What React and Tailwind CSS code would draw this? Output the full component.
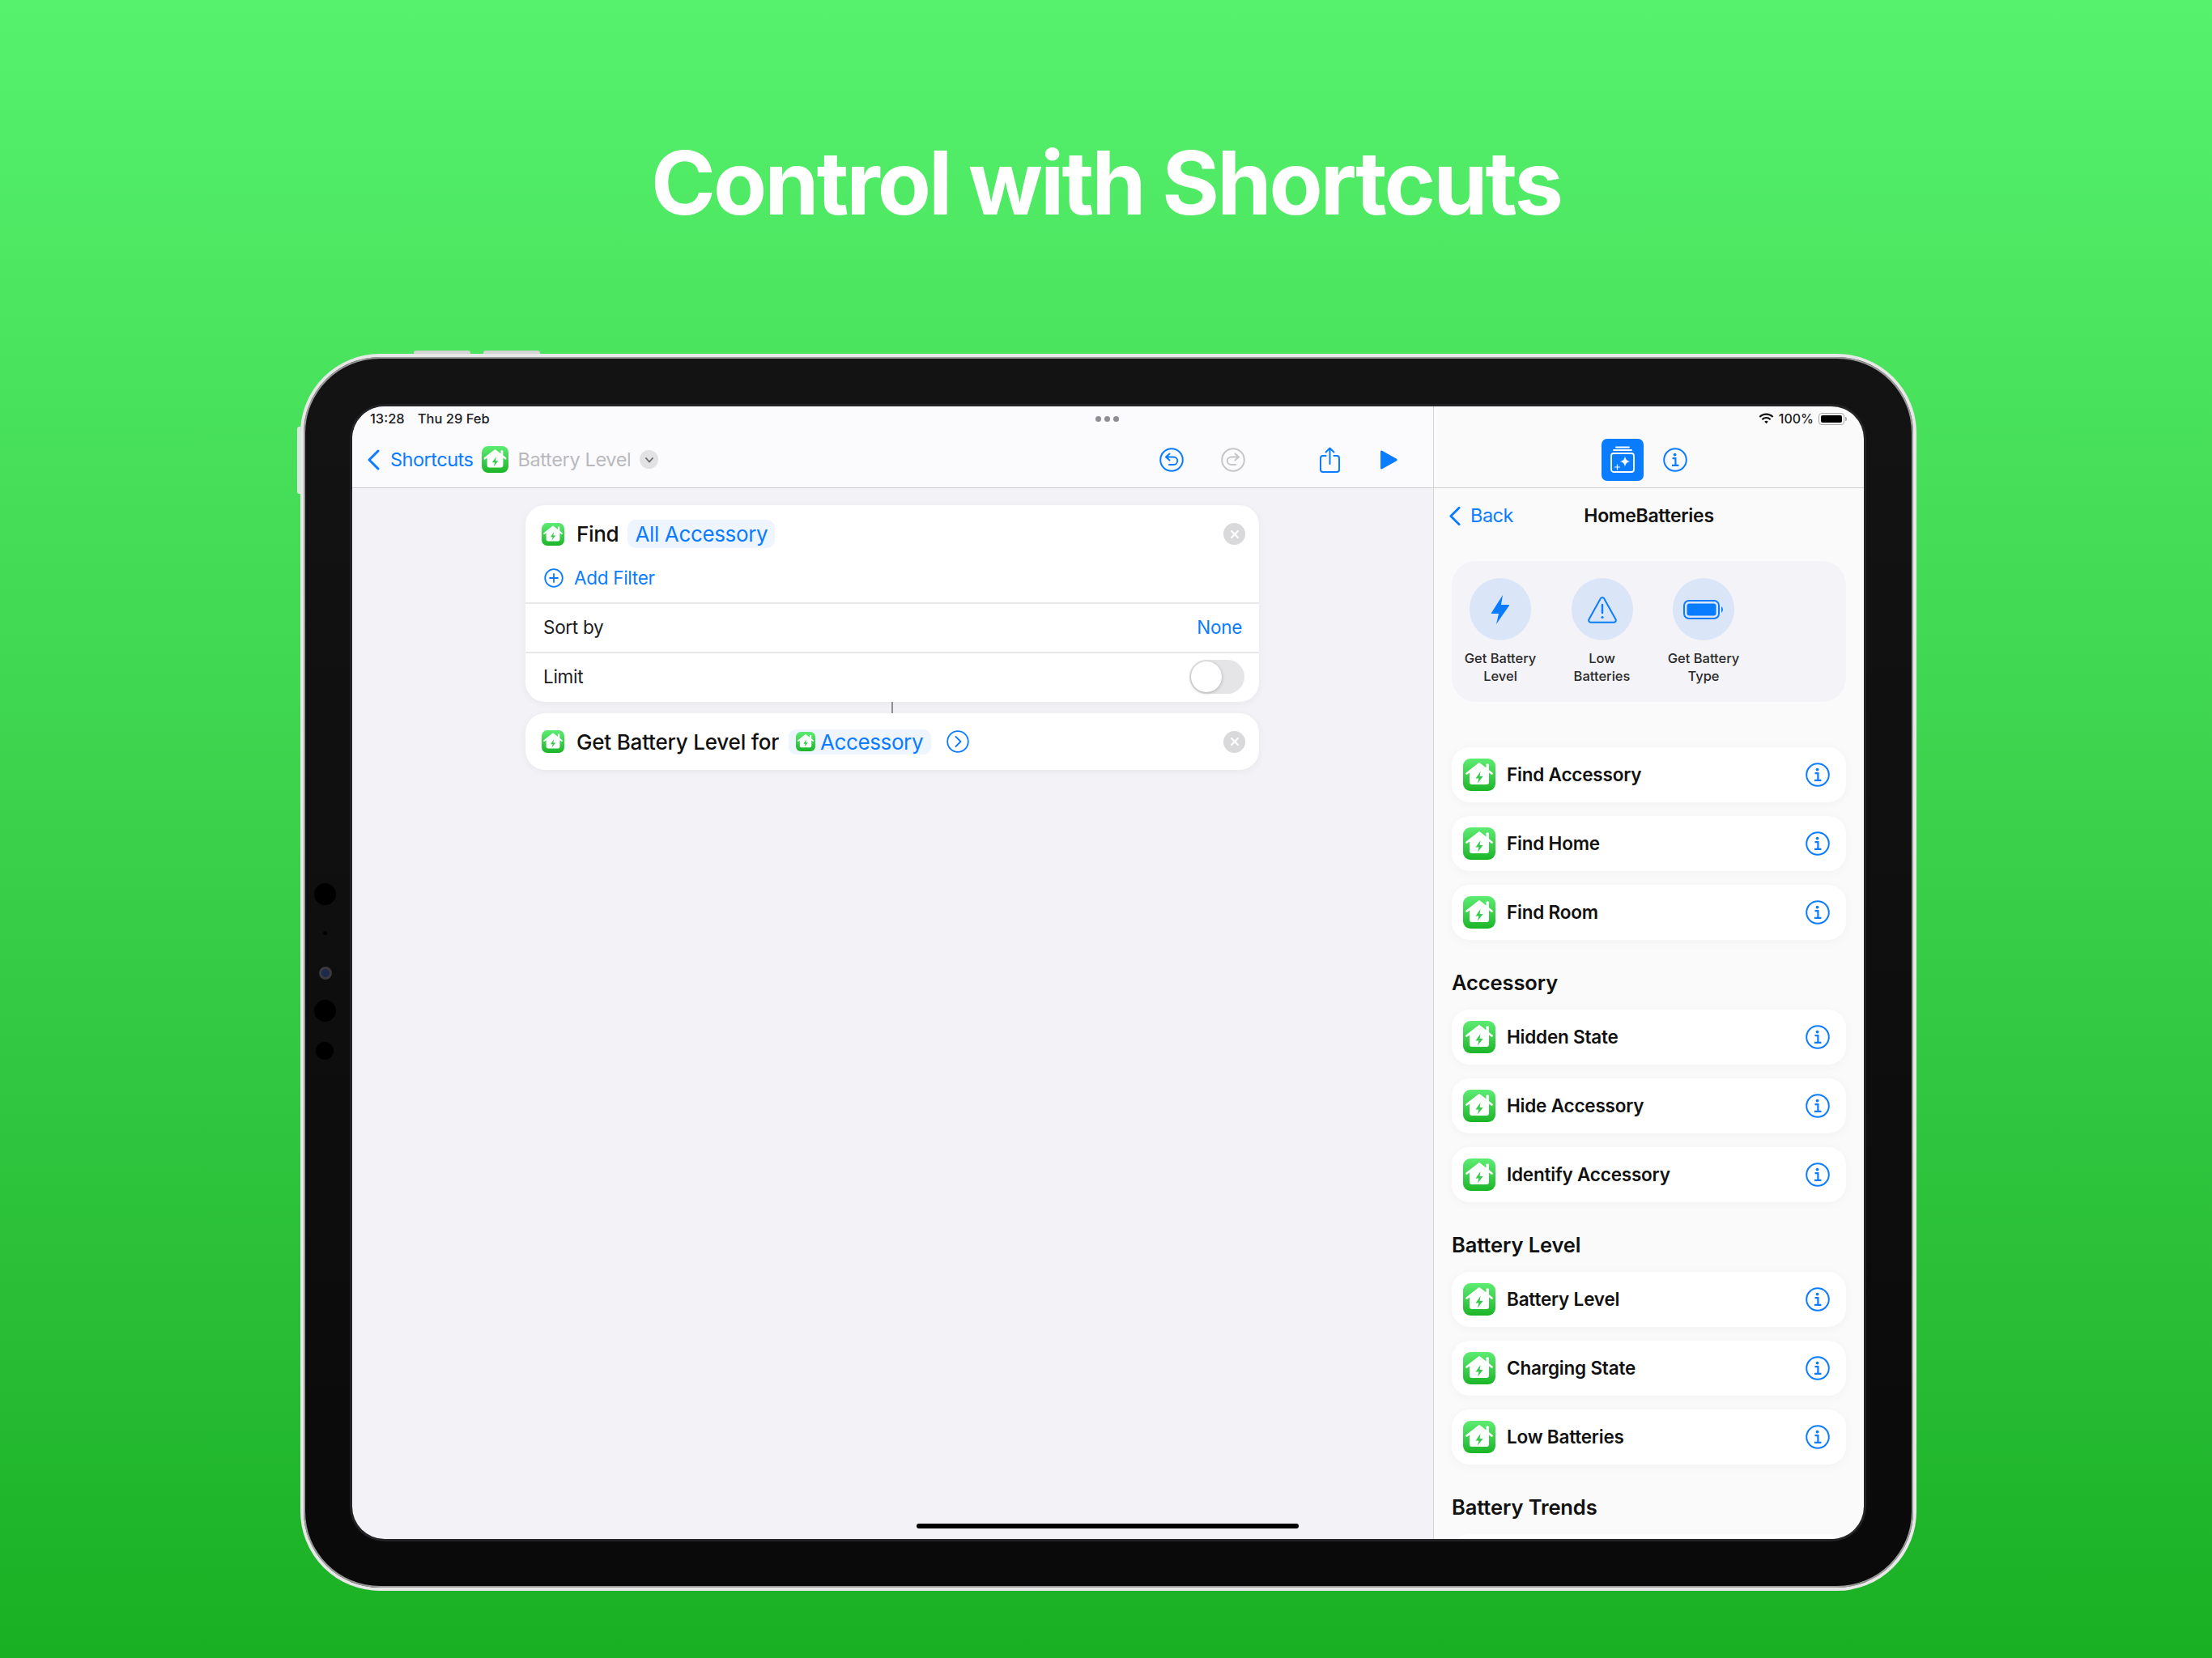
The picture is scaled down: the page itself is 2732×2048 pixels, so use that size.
import React from 'react';

const BLUE = '#0a7cff';

// Green app tile with the house and bolt
const AppIcon = ({ className }) => (
  <div className={`shrink-0 bg-linear-to-b from-[#5cec72] to-[#19b526] ${className}`}>
    <svg viewBox="0 0 40 40" className="w-full h-full">
      <path d="M8 17 L20 8 L32 17 V29 a3 3 0 0 1 -3 3 H11 a3 3 0 0 1 -3 -3 Z" fill="#fff" />
      <path d="M4.5 18.5 L20 6.5 L35.5 18.5" fill="none" stroke="#fff" strokeWidth="2.8" strokeLinecap="round" strokeLinejoin="round" />
      <rect x="28.5" y="6.5" width="3.4" height="8" rx="0.8" fill="#fff" />
      <path d="M21.5 16 L15.5 24.5 H19.4 L18 30.5 L24.6 22 H20.6 Z" fill="#35cc4c" />
    </svg>
  </div>
);

const InfoIcon = ({ className }) => (
  <svg viewBox="0 0 30 30" className={className} fill="none" stroke={BLUE}>
    <circle cx="15" cy="15" r="13.8" strokeWidth="2" />
    <circle cx="14.6" cy="8.6" r="1.9" fill={BLUE} stroke="none" />
    <path d="M11.5 13.2 H15.4 V21.6 M11 21.8 H19.4" strokeWidth="2.2" />
  </svg>
);

const CloseButton = () => (
  <div className="w-[27px] h-[27px] rounded-full bg-[#d9d9db] flex items-center justify-center">
    <svg viewBox="0 0 12 12" className="w-[12px] h-[12px]" stroke="#fff" strokeWidth="2" strokeLinecap="round">
      <path d="M2 2 L10 10 M10 2 L2 10" />
    </svg>
  </div>
);

const BackChevron = ({ className }) => (
  <svg viewBox="0 0 16 26" className={className} fill="none" stroke={BLUE} strokeWidth="3" strokeLinecap="round" strokeLinejoin="round">
    <path d="M14 2 L3 13 L14 24" />
  </svg>
);

const ActionRow = ({ label }) => (
  <div className="h-[68px] bg-white rounded-[22px] shadow-[0_2px_14px_rgba(0,0,0,0.035)] flex items-center pl-[14px] pr-[20px]">
    <AppIcon className="w-[40px] h-[40px] rounded-[9px]" />
    <span className="ml-[14px] text-[22.5px] font-semibold text-[#111] tracking-[-0.2px]">{label}</span>
    <InfoIcon className="ml-auto w-[30px] h-[30px]" />
  </div>
);

const SectionTitle = ({ children }) => (
  <h2 className="mt-[37px] h-[32px] leading-[32px] mb-[17px] text-[25.5px] font-semibold text-[#111] tracking-[-0.1px]">{children}</h2>
);

const Section = ({ title, items }) => (
  <div>
    <SectionTitle>{title}</SectionTitle>
    <div className="flex flex-col gap-[17px]">
      {items.map((label) => (
        <ActionRow key={label} label={label} />
      ))}
    </div>
  </div>
);

const Suggestion = ({ label, children }) => (
  <div className="w-[110px] flex flex-col items-center">
    <div className="w-[76px] h-[77px] rounded-full bg-[#dae6f8] flex items-center justify-center">{children}</div>
    <p className="mt-[11px] text-[16.5px] leading-[22px] text-center text-[#2a2a2a] font-medium">{label}</p>
  </div>
);

const App = () => {
  return (
    <div className="w-[2732px] h-[2048px] overflow-hidden flex flex-col items-center bg-linear-to-b from-[#56f26d] to-[#19b023] font-['Inter',sans-serif]">
      <h1 className="pt-[160px] h-[292px] leading-[132px] text-[108px] font-bold text-white tracking-[-2.9px]">
        Control with Shortcuts
      </h1>

      {/* Device */}
      <div className="relative mt-[145px] ml-[6px] w-[1996px] h-[1528px] rounded-[98px] bg-linear-to-b from-[#131313] to-[#0a0a0a] border-[4px] border-[#e8e8e8] shadow-[inset_0_0_0_2px_#9a9a9a] pt-[61px] pl-[60px]">
        {/* Hardware buttons */}
        <div className="absolute top-[-8px] left-[136px] w-[70px] h-[4px] rounded-t-[3px] bg-[#d4d4d4]" />
        <div className="absolute top-[-8px] left-[222px] w-[70px] h-[4px] rounded-t-[3px] bg-[#d4d4d4]" />
        <div className="absolute top-[86px] left-[-8px] w-[4px] h-[83px] rounded-l-[3px] bg-[#d8e8dc]" />

        {/* Cameras and sensors */}
        <div className="absolute left-[13px] top-[650px] w-[27px] h-[27px] rounded-full bg-black" />
        <div className="absolute left-[24px] top-[709px] w-[5px] h-[5px] rounded-full bg-black" />
        <div className="absolute left-[19px] top-[753px] w-[16px] h-[16px] rounded-full bg-[#1e2a4c] border-[3px] border-[#3a3a3e]" />
        <div className="absolute left-[13px] top-[794px] w-[27px] h-[27px] rounded-full bg-black" />
        <div className="absolute left-[15px] top-[846px] w-[22px] h-[22px] rounded-full bg-black" />

        {/* Screen */}
        <div className="relative w-[1867px] h-[1399px] rounded-[40px] overflow-hidden flex shadow-[0_0_0_3px_#232326]">
          {/* Editor */}
          <div className="w-[1336px] flex flex-col bg-[#f2f2f7] border-r border-[#d4d4d8]">
            <header className="h-[101px] shrink-0 flex flex-col bg-[#fbfbfd] border-b border-[#cfcfd3]">
              <div className="h-[30px] flex items-center pl-[22px] pr-[388px] text-[16.5px] font-medium text-[#1c1c1e]">
                <span>13:28</span>
                <span className="ml-[16px]">Thu 29 Feb</span>
                <div className="ml-auto flex gap-[4px]">
                  <div className="w-[7px] h-[7px] rounded-full bg-[#8e8e93]" />
                  <div className="w-[7px] h-[7px] rounded-full bg-[#8e8e93]" />
                  <div className="w-[7px] h-[7px] rounded-full bg-[#8e8e93]" />
                </div>
              </div>
              <div className="flex-1 flex items-center pl-[18px] pr-[44px] pt-[1px]">
                <BackChevron className="w-[16px] h-[26px]" />
                <span className="ml-[13px] text-[23.5px] text-[#0a7cff] tracking-[-0.5px]">Shortcuts</span>
                <AppIcon className="ml-[11px] w-[33px] h-[33px] rounded-[8px]" />
                <span className="ml-[11px] text-[23.5px] text-[#b9b9bd] tracking-[-0.35px]">Battery Level</span>
                <div className="ml-[11px] w-[23px] h-[23px] rounded-full bg-[#e2e2e5] flex items-center justify-center">
                  <svg viewBox="0 0 12 12" className="w-[12px] h-[12px]" fill="none" stroke="#666" strokeWidth="1.8" strokeLinecap="round" strokeLinejoin="round">
                    <path d="M2 4 L6 8.5 L10 4" />
                  </svg>
                </div>

                <svg viewBox="0 0 30 30" className="ml-auto w-[30px] h-[30px]" fill="none" stroke={BLUE} strokeWidth="2" strokeLinecap="round" strokeLinejoin="round">
                  <circle cx="15" cy="15" r="13.8" />
                  <path d="M12.5 7.5 L8 11.5 L12.5 15.5 M8.5 11.5 H17.5 a4.5 4.5 0 0 1 0 9.5 H12" />
                </svg>
                <svg viewBox="0 0 30 30" className="ml-[46px] w-[30px] h-[30px]" fill="none" stroke="#c6c6c8" strokeWidth="2" strokeLinecap="round" strokeLinejoin="round">
                  <circle cx="15" cy="15" r="13.8" />
                  <path d="M17.5 7.5 L22 11.5 L17.5 15.5 M21.5 11.5 H12.5 a4.5 4.5 0 0 0 0 9.5 H18" />
                </svg>
                <svg viewBox="0 0 25 32" className="ml-[92px] w-[25px] h-[32px]" fill="none" stroke={BLUE} strokeWidth="2" strokeLinecap="round" strokeLinejoin="round">
                  <path d="M7.5 11 H4 a3 3 0 0 0 -3 3 V28 a3 3 0 0 0 3 3 H21 a3 3 0 0 0 3 -3 V14 a3 3 0 0 0 -3 -3 H17.5" />
                  <path d="M12.5 21 V2 M7.5 6.5 L12.5 1.5 L17.5 6.5" />
                </svg>
                <svg viewBox="0 0 22 24" className="ml-[49px] w-[22px] h-[24px]">
                  <path d="M1 2 a1.4 1.4 0 0 1 2.1 -1.2 L21 10.8 a1.4 1.4 0 0 1 0 2.4 L3.1 23.2 A1.4 1.4 0 0 1 1 22 Z" fill={BLUE} />
                </svg>
              </div>
            </header>

            <main className="flex-1 pt-[21px] pl-[214px]">
              <div className="w-[906px] bg-white rounded-[24px] shadow-[0_2px_10px_rgba(0,0,0,0.05)]">
                <div className="h-[120px] pt-[18px] pl-[20px] pr-[17px]">
                  <div className="flex items-center h-[35px]">
                    <AppIcon className="w-[28px] h-[28px] rounded-[7px]" />
                    <span className="ml-[15px] text-[26px] font-medium text-[#111] tracking-[-0.3px]">Find</span>
                    <div className="ml-[11px] h-[35px] px-[9px] rounded-[10px] bg-[#eef5fe] flex items-center text-[26px] font-normal text-[#0a7cff] tracking-[-0.35px]">
                      All Accessory
                    </div>
                    <div className="ml-auto"><CloseButton /></div>
                  </div>
                  <div className="flex items-center mt-[20px] pl-[3px]">
                    <svg viewBox="0 0 24 24" className="w-[24px] h-[24px]" fill="none" stroke={BLUE} strokeWidth="1.8" strokeLinecap="round">
                      <circle cx="12" cy="12" r="10.8" />
                      <path d="M12 7 V17 M7 12 H17" />
                    </svg>
                    <span className="ml-[13px] text-[22.5px] text-[#0a7cff] tracking-[-0.3px]">Add Filter</span>
                  </div>
                </div>
                <div className="h-[61px] pb-[2px] border-t-2 border-[#e8e8ea] flex items-center justify-between pl-[22px] pr-[21px] text-[22.5px] tracking-[-0.3px]">
                  <span className="text-[#1c1c1e]">Sort by</span>
                  <span className="text-[#0a7cff]">None</span>
                </div>
                <div className="h-[62px] border-t-2 border-[#e8e8ea] flex items-center justify-between pl-[22px] pr-[18px] text-[22.5px] tracking-[-0.3px]">
                  <span className="pb-[2px] text-[#1c1c1e]">Limit</span>
                  <div className="w-[68px] h-[42px] mb-[2px] rounded-full bg-[#e5e5e7] p-[2px]">
                    <div className="w-[38px] h-[38px] rounded-full bg-white shadow-[0_1px_4px_rgba(0,0,0,0.25)]" />
                  </div>
                </div>
              </div>

              <div className="ml-[452px] w-[2px] h-[14px] bg-[#8e8e93]" />

              <div className="w-[906px] h-[70px] bg-white rounded-[24px] shadow-[0_2px_10px_rgba(0,0,0,0.05)] flex items-center pl-[20px] pr-[17px]">
                <AppIcon className="w-[28px] h-[28px] rounded-[7px]" />
                <span className="ml-[15px] text-[26px] font-medium text-[#111] tracking-[-0.2px]">Get Battery Level for</span>
                <div className="ml-[12px] h-[31px] pl-[9px] pr-[10px] rounded-[9px] bg-[#eef5fe] flex items-center">
                  <AppIcon className="w-[24px] h-[24px] rounded-[6px]" />
                  <span className="ml-[6px] text-[26px] text-[#0a7cff] tracking-[-0.4px]">Accessory</span>
                </div>
                <svg viewBox="0 0 28 28" className="ml-[19px] w-[28px] h-[28px]" fill="none" stroke={BLUE} strokeWidth="1.8" strokeLinecap="round" strokeLinejoin="round">
                  <circle cx="14" cy="14" r="12.8" />
                  <path d="M11.5 8 L17.5 14 L11.5 20" />
                </svg>
                <div className="ml-auto"><CloseButton /></div>
              </div>
            </main>
          </div>

          {/* Sidebar */}
          <aside className="flex-1 flex flex-col bg-[#fafafa] min-w-0">
            <header className="h-[101px] shrink-0 flex flex-col border-b border-[#cfcfd3]">
              <div className="h-[30px] flex items-center justify-end pr-[21px] text-[16px] font-medium text-[#1c1c1e]">
                <svg viewBox="0 0 20 14" className="w-[19px] h-[14px]" fill="none" stroke="#111" strokeWidth="2.2" strokeLinecap="butt">
                  <path d="M1.4 5 a12 12 0 0 1 17.2 0" />
                  <path d="M4.6 8.2 a7.6 7.6 0 0 1 10.8 0" />
                  <path d="M10 13.6 L7.6 11 a3.4 3.4 0 0 1 4.8 0 Z" fill="#111" stroke="none" />
                </svg>
                <span className="ml-[6px]">100%</span>
                <div className="ml-[6px] w-[32px] h-[15px] rounded-[4px] border border-[#a8a8a8] p-[2px]">
                  <div className="w-full h-full rounded-[2px] bg-black" />
                </div>
                <div className="ml-[1px] w-[2px] h-[5px] rounded-r-[2px] bg-[#a8a8a8]" />
              </div>
              <div className="flex-1 flex items-center pl-[207px] pt-[1px]">
                <div className="w-[52px] h-[52px] rounded-[7px] bg-[#0a7cff] flex items-center justify-center">
                  <svg viewBox="0 0 32 36" className="w-[32px] h-[36px]" fill="none" stroke="#fff" strokeWidth="1.8" strokeLinecap="round" strokeLinejoin="round">
                    <path d="M8 2.5 H24 M5 6 H27" />
                    <rect x="2" y="10" width="28" height="23" rx="3" />
                    <path d="M19 13.5 Q19.6 19 25 20 Q19.6 21 19 26.5 Q18.4 21 13 20 Q18.4 19 19 13.5 Z" fill="#fff" stroke="none" />
                    <path d="M9.5 24 V30 M6.5 27 H12.5" strokeWidth="1.2" />
                  </svg>
                </div>
                <InfoIcon className="ml-[24px] w-[30px] h-[30px]" />
              </div>
            </header>

            <div className="h-[68px] shrink-0 grid grid-cols-[1fr_auto_1fr] items-center pl-[18px]">
              <div className="flex items-center">
                <BackChevron className="w-[15px] h-[25px]" />
                <span className="ml-[12px] text-[23.5px] text-[#0a7cff] tracking-[-0.5px]">Back</span>
              </div>
              <span className="text-[23px] font-semibold text-[#111] tracking-[-0.3px] pr-[18px]">HomeBatteries</span>
            </div>

            <div className="mt-[22px] mx-[22px] flex flex-col">
              <div className="h-[174px] shrink-0 rounded-[30px] bg-[#f3f3f8] pt-[21px] pl-[5px] flex gap-[15.5px]">
                <Suggestion label={<>Get Battery<br />Level</>}>
                  <svg viewBox="0 0 24 38" className="w-[24px] h-[38px]">
                    <path d="M15 1 L1 23 a0.6 0.6 0 0 0 .5 1 H10 L7 37 L23 14 a0.6 0.6 0 0 0 -.5 -1 H13 Z" fill={BLUE} />
                  </svg>
                </Suggestion>
                <Suggestion label={<>Low<br />Batteries</>}>
                  <svg viewBox="0 0 36 34" className="w-[36px] h-[34px]" fill="none" stroke={BLUE} strokeWidth="2" strokeLinecap="round" strokeLinejoin="round">
                    <path d="M16 3 a2.4 2.4 0 0 1 4 0 L34.5 29 a2.6 2.6 0 0 1 -2 3.8 H3.5 a2.6 2.6 0 0 1 -2 -3.8 Z" />
                    <path d="M18 11 V21" strokeWidth="2.4" />
                    <circle cx="18" cy="26.5" r="1.6" fill={BLUE} stroke="none" />
                  </svg>
                </Suggestion>
                <Suggestion label={<>Get Battery<br />Type</>}>
                  <svg viewBox="0 0 50 24" className="w-[50px] h-[24px]" fill="none">
                    <rect x="1" y="1" width="43" height="22" rx="6" stroke={BLUE} strokeWidth="2" />
                    <rect x="4.5" y="4.5" width="36" height="15" rx="3" fill={BLUE} />
                    <path d="M47 8 a5 5 0 0 1 0 8 Z" fill={BLUE} />
                  </svg>
                </Suggestion>
              </div>

              <div className="mt-[56px] flex flex-col gap-[17px]">
                <ActionRow label="Find Accessory" />
                <ActionRow label="Find Home" />
                <ActionRow label="Find Room" />
              </div>
              <Section title="Accessory" items={['Hidden State', 'Hide Accessory', 'Identify Accessory']} />
              <Section title="Battery Level" items={['Battery Level', 'Charging State', 'Low Batteries']} />
              <SectionTitle>Battery Trends</SectionTitle>
              {/* Only the top edge of the next row shows above the screen edge */}
              <div className="h-[68px] shrink-0 bg-white rounded-[22px]" />
            </div>
          </aside>

          {/* Home indicator */}
          <div className="absolute left-[697px] bottom-[13px] w-[472px] h-[6px] rounded-full bg-black" />
        </div>
      </div>
    </div>
  );
};

export default App;
